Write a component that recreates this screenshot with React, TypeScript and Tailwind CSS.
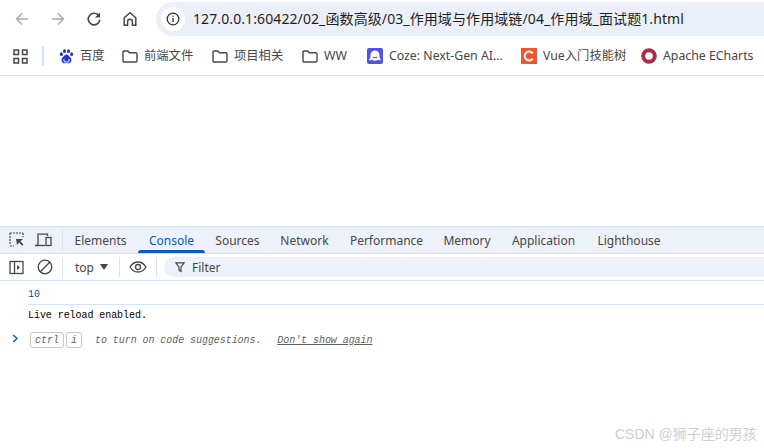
const uiFont = { fontFamily: '"Noto Sans", "Noto Sans CJK SC", sans-serif' };

const Folder = () => (
  <svg width="16" height="13" viewBox="0 0 16 13" fill="none" stroke="#474747" strokeWidth="1.4" className="shrink-0">
    <path d="M1 2.2c0-.7.5-1.2 1.2-1.2h3.6l1.6 1.8h6.4c.7 0 1.2.5 1.2 1.2v6.8c0 .7-.5 1.2-1.2 1.2H2.2c-.7 0-1.2-.5-1.2-1.2z" />
  </svg>
);

const Bookmark = ({ icon, label, width }: { icon: React.ReactNode; label: string; width: string }) => (
  <div className={`flex items-center gap-[6px] shrink-0 ${width}`}>
    {icon}
    <span className="text-[12.3px] text-[#474747] whitespace-nowrap leading-none">{label}</span>
  </div>
);

const tabs = [
  { label: "Elements", w: "w-[75px]" },
  { label: "Console", w: "w-[67px]", active: true },
  { label: "Sources", w: "w-[65px]" },
  { label: "Network", w: "w-[69px]" },
  { label: "Performance", w: "w-[95px]" },
  { label: "Memory", w: "w-[66px]" },
  { label: "Application", w: "w-[87px]" },
  { label: "Lighthouse", w: "w-[84px]" },
];

export default function App() {
  return (
    <div className="relative w-[764px] h-[448px] overflow-hidden bg-white" style={uiFont}>
      {/* browser toolbar */}
      <div className="flex items-center h-[37px]">
        <div className="w-[44px] flex justify-center">
          <svg width="16" height="16" viewBox="0 0 16 16" fill="none" stroke="#a9abae" strokeWidth="1.5">
            <path d="M14 8H2.5M8 2.5 2.5 8 8 13.5" />
          </svg>
        </div>
        <div className="w-[28px] flex justify-center">
          <svg width="16" height="16" viewBox="0 0 16 16" fill="none" stroke="#a9abae" strokeWidth="1.5">
            <path d="M2 8h11.500M8 2.500 13.500 8 8 13.500" />
          </svg>
        </div>
        <div className="w-[44px] flex justify-center">
          <svg width="16" height="16" viewBox="0 0 16 16" fill="none" stroke="#474747" strokeWidth="1.600">
            <path d="M12.800 4.800A5.800 5.800 0 1 0 13.800 8.600" />
            <path d="M14 1.400v5H9z" fill="#474747" stroke="none" />
          </svg>
        </div>
        <div className="w-[28px] flex justify-center">
          <svg width="16" height="16" viewBox="0 0 16 16" fill="none" stroke="#474747" strokeWidth="1.500">
            <path d="M2.200 14.200V6.800L8 1.800l5.800 5v7.400h-3.400v-3.400c0-3.400-4.800-3.400-4.800 0v3.400z" />
          </svg>
        </div>
        <div className="flex items-center ml-[12px] flex-1 h-[34px] rounded-l-full bg-[#ebf0f8] pl-[5px]">
          <div className="w-[24px] h-[24px] rounded-full bg-white flex items-center justify-center">
            <svg width="14" height="14" viewBox="0 0 14 14" fill="none" stroke="#333" strokeWidth="1.300">
              <circle cx="7" cy="7" r="5.800" />
              <path d="M7 6v4" />
              <path d="M7 3.400v1.400" />
            </svg>
          </div>
          <span className="ml-[8px] text-[14px] tracking-[0.1px] text-[#1f1f1f] whitespace-nowrap leading-none">
            127.0.0.1:60422/02_函数高级/03_作用域与作用域链/04_作用域_面试题1.html
          </span>
        </div>
      </div>

      {/* bookmarks bar */}
      <div className="flex items-center h-[38px] border-b border-[#e3e3e3] box-content">
        <div className="w-[42px] flex items-center pl-[13px]">
          <svg width="15" height="15" viewBox="0 0 15 15" fill="none" stroke="#474747" strokeWidth="1.500">
            <path d="M1 1h4.500v4.500H1zM9.500 1H14v4.500H9.500zM1 9.500h4.500V14H1zM9.500 9.500H14V14H9.500z" />
          </svg>
        </div>
        <div className="w-[2px] h-[20px] bg-[#d3e3fd]" />
        <div className="ml-[15px] flex items-center">
          <Bookmark
            width="w-[63px]"
            label="百度"
            icon={
              <svg width="15" height="15" viewBox="0 0 15 15" className="shrink-0">
                <g fill="#2932e1">
                  <ellipse cx="2.400" cy="5.200" rx="1.500" ry="1.900" />
                  <ellipse cx="5.500" cy="2.200" rx="1.500" ry="1.900" />
                  <ellipse cx="9.500" cy="2.200" rx="1.500" ry="1.900" />
                  <ellipse cx="12.600" cy="5.200" rx="1.500" ry="1.900" />
                  <path d="M7.500 5.500c-1.800 0-2.400 1.700-3.800 2.800-1.800 1.400-1.600 5.700 1.300 5.900 1 .1 1.600-.3 2.500-.3s1.500.4 2.500.3c2.900-.2 3.100-4.500 1.300-5.900C9.900 7.200 9.300 5.500 7.500 5.500z" />
                </g>
                <path d="M5 10v2c0 .6.500 1 1.200 1h3c.6 0 .9-.4.900-1v-2" fill="none" stroke="#fff" strokeWidth="1" />
              </svg>
            }
          />
          <Bookmark width="w-[90px]" label="前端文件" icon={<Folder />} />
          <Bookmark width="w-[90px]" label="项目相关" icon={<Folder />} />
          <Bookmark width="w-[65px]" label="WW" icon={<Folder />} />
          <Bookmark
            width="w-[154px]"
            label="Coze: Next-Gen AI..."
            icon={
              <span className="w-[16px] h-[16px] rounded-[2px] bg-[#4d53e8] flex items-center justify-center shrink-0">
                <svg width="14" height="14" viewBox="0 0 14 14">
                  <path d="M7 1.500a4.500 4.500 0 0 0-4.500 4.500v2.300L1 11c1.200.4 2.200.3 3-.2.900.6 2 .9 3 .9s2.100-.3 3-.9c.8.500 1.800.6 3 .2L11.500 8.300V6A4.500 4.500 0 0 0 7 1.500z" fill="#fff" />
                  <path d="M4.800 7.800c1.200 1.300 3.200 1.300 4.400 0" fill="none" stroke="#4d53e8" strokeWidth="1.100" />
                </svg>
              </span>
            }
          />
          <Bookmark
            width="w-[120px]"
            label="Vue入门技能树"
            icon={
              <span className="w-[16px] h-[16px] bg-[#f5532d] flex items-center justify-center shrink-0">
                <svg width="12" height="12" viewBox="0 0 12 12" fill="none" stroke="#fff" strokeWidth="2">
                  <path d="M9.800 3.400A4.500 4.500 0 1 0 9.800 8.600" />
                </svg>
              </span>
            }
          />
          <Bookmark
            width="w-[112px]"
            label="Apache ECharts"
            icon={
              <svg width="16" height="16" viewBox="0 0 16 16" fill="none" className="shrink-0">
                <circle cx="8" cy="8" r="5.800" stroke="#a92c4e" strokeWidth="4" />
              </svg>
            }
          />
        </div>
      </div>

      {/* page content */}
      <div className="h-[150px]" />

      {/* devtools tabs */}
      <div className="flex items-stretch h-[26px] bg-[#edf2fa] border-y border-[#d3e3fd] box-content">
        <div className="w-[62px] flex items-center pl-[9px] gap-[11px] shrink-0">
          <svg width="16" height="16" viewBox="0 0 16 16" fill="none" className="shrink-0">
            <path d="M1 1h13M1 1v12M1 14h4M14 1v4" stroke="#474747" strokeWidth="1.200" strokeDasharray="2 1" />
            <path d="M7 7h7l-2.600 2.200 3 3.300-1.300 1.300-3-3.200L8 13z" fill="#474747" />
          </svg>
          <svg width="17" height="14" viewBox="0 0 17 14" fill="none" stroke="#474747" strokeWidth="1.300" className="shrink-0 -ml-[1px]">
            <path d="M0 12.500h3M3 12V1.200h9.500V3" />
            <path d="M3 12.500h7" />
            <rect x="11" y="4.500" width="5" height="8" />
          </svg>
        </div>
        <div className="w-px h-[20px] self-center bg-[#d3e3fd]" />
        {tabs.map((t) => (
          <div
            key={t.label}
            className={`relative flex items-center justify-center shrink-0 pt-[1px] text-[12px] ${t.w} ${
              t.active ? "text-[#0b57d0]" : "text-[#474747]"
            }`}
          >
            {t.label}
            {t.active && <div className="absolute left-0 right-0 bottom-0 h-[3px] bg-[#0b57d0] rounded-t-[3px]" />}
          </div>
        ))}
      </div>

      {/* console toolbar */}
      <div className="flex items-center h-[26px] border-b border-[#d3e3fd] box-content">
        <div className="w-[32px] flex justify-center">
          <svg width="15" height="15" viewBox="0 0 15 15" fill="none" stroke="#474747" strokeWidth="1.300">
            <rect x="1" y="1.500" width="13" height="12" />
            <path d="M5.500 1.500v12" />
            <path d="M8 5v5l3-2.500z" fill="#474747" stroke="none" />
          </svg>
        </div>
        <div className="w-[25px] flex justify-center">
          <svg width="16" height="16" viewBox="0 0 16 16" fill="none" stroke="#474747" strokeWidth="1.300">
            <circle cx="8" cy="8" r="6.800" />
            <path d="M3.300 12.700 12.700 3.300" />
          </svg>
        </div>
        <div className="w-px h-[20px] ml-[5px] bg-[#d3e3fd]" />
        <div className="flex items-center pl-[12px] w-[56px] gap-[6px]">
          <span className="text-[12px] text-[#474747] pt-[1px]">top</span>
          <svg width="8" height="6" viewBox="0 0 8 6" fill="#474747">
            <path d="M0 0h8L4 6z" />
          </svg>
        </div>
        <div className="w-px h-[20px] bg-[#d3e3fd]" />
        <div className="w-[36px] flex justify-center">
          <svg width="18" height="12" viewBox="0 0 18 12" fill="none" stroke="#474747" strokeWidth="1.300">
            <path d="M1 6c2-3.300 4.800-5 8-5s6 1.700 8 5c-2 3.300-4.800 5-8 5s-6-1.700-8-5z" />
            <circle cx="9" cy="6" r="2.500" />
          </svg>
        </div>
        <div className="w-px h-[20px] bg-[#d3e3fd]" />
        <div className="flex items-center flex-1 h-[20px] ml-[7px] rounded-l-full bg-[#edf2fa] pl-[11px] gap-[7px]">
          <svg width="10" height="11" viewBox="0 0 10 11" fill="none" stroke="#474747" strokeWidth="1.200">
            <path d="M.8.800h8.400L6 5v4.500L4 8.300V5z" />
          </svg>
          <span className="text-[12px] text-[#474747] pt-[1px]">Filter</span>
        </div>
      </div>

      {/* console output */}
      <div className="font-['Liberation_Mono',monospace] text-[10px] tracking-[-0.06px]">
        <div className="ml-[28px] h-[24px] pt-[3px] flex items-center border-b border-[#d3e3fd] text-[#0b4fa8]">10</div>
        <div className="ml-[28px] h-[20px] pt-[1px] flex items-center text-black">Live reload enabled.</div>
        <div className="flex items-center h-[24px] mt-[3px] italic text-[#5f5f5f]">
          <svg width="7" height="9" viewBox="0 0 7 9" fill="none" stroke="#0b57d0" strokeWidth="1.400" className="ml-[12px] mb-[3px]">
            <path d="M1.200 1 5 4.500 1.200 8" />
          </svg>
          <span className="ml-[11px] w-[34px] h-[16px] border border-[#c4c7c5] rounded-[3px] flex items-center justify-center">ctrl</span>
          <span className="ml-[2px] w-[16px] h-[16px] border border-[#c4c7c5] rounded-[3px] flex items-center justify-center">i</span>
          <span className="ml-[13px] whitespace-pre">to turn on code suggestions.</span>
          <span className="ml-[16px] underline">Don't show again</span>
        </div>
      </div>

      {/* watermark */}
      <div
        className="absolute left-[615px] top-[425px] text-[14px] leading-[18px] text-[#cfcfcf] whitespace-nowrap"
        style={{ fontFamily: '"Liberation Sans", "Noto Sans CJK SC", sans-serif' }}
      >
        CSDN @狮子座的男孩
      </div>
    </div>
  );
}
